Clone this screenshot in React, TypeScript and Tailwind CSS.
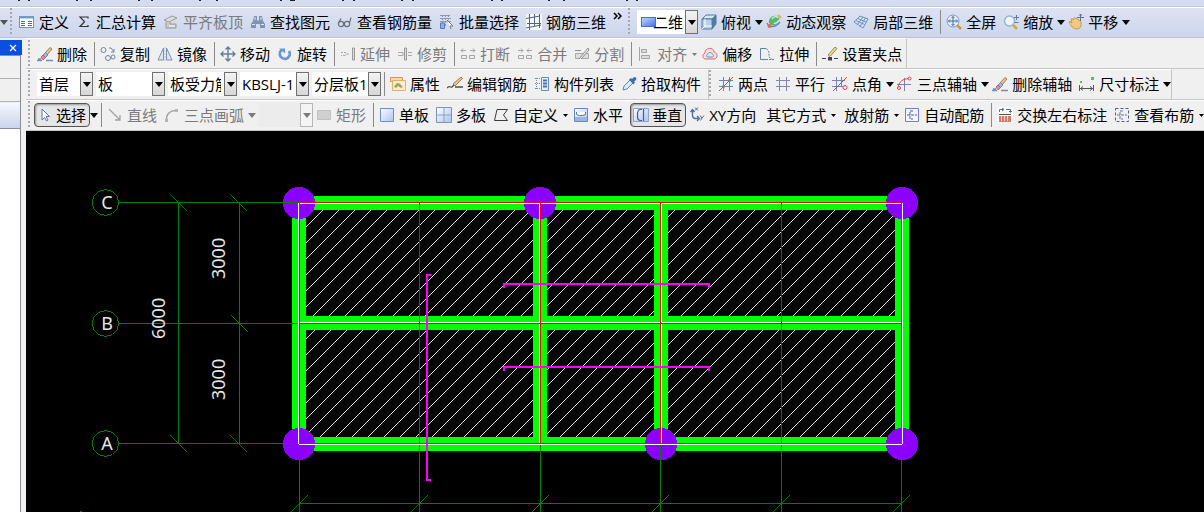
import { useState } from "react";
import type { ReactNode } from "react";
import clsx from "clsx";

/* 16x16 toolbar icons */
const icons: Record<string, ReactNode> = {
  define: (
    <>
      <rect x="0.5" y="2.5" width="14" height="11" fill="#fff" stroke="#7c93ad" />
      <path d="M1 3.5h13" stroke="#6f9fd8" strokeWidth="2" />
      <path d="M2 7.5h4M2 9.5h4M2 11.5h4M9 7.5h4M9 9.5h4M9 11.5h4" stroke="#56677a" />
    </>
  ),
  sum: <path d="M12 4.5V3H4l4.5 4.7L4 12.5h8V11" fill="none" stroke="#333" strokeWidth="1.2" />,
  slabTop: (
    <>
      <path d="M1 6 9 2l5 2-8 4z" fill="#ddd" stroke="#9a9a9a" />
      <path d="M3 8v6h10v-4H7V8" fill="#c9c9c9" stroke="#9a9a9a" />
      <path d="M6 12h6" stroke="#fff" />
    </>
  ),
  find: (
    <>
      <path d="M4 2h3v4l1 1 1-1V2h3l1 5 2 3v4h-5v-4H6v4H1v-4l2-3z" fill="#7f92b0" />
      <path d="M2 10.5h3M11 10.5h3M5 3v3M11 3v3" stroke="#dfe7f5" />
    </>
  ),
  glasses: (
    <g fill="none" stroke="#6d7075" strokeWidth="1.2">
      <circle cx="4" cy="10" r="2.6" />
      <circle cx="10" cy="10" r="2.6" />
      <path d="M1.500 9 4 4.500M12.500 9 14 3.500M6.500 9.500h1" />
    </g>
  ),
  batch: (
    <>
      <path d="M1 1.500h10M1 4.500h12M1 7.500h12M3.500 1v12M6.500 1v12M9.500 1v6" stroke="#8d99ad" strokeDasharray="2 1" />
      <path d="M1.500 9v5.500h4V9z" fill="#8eaeee" stroke="#5a78b8" />
      <path d="m8 6 6 6h-3l1 3" fill="#fff" stroke="#777" />
    </>
  ),
  rebar3d: (
    <>
      <rect width="16" height="16" fill="#f5f7fb" />
      <path d="M3.500 0v16M8.500 0v12M13.500 0v14M0 4.500 14 2M1 9.500h14M0 14l15-3" stroke="#53647e" fill="none" />
    </>
  ),
  cube: (
    <>
      <path d="M1 5 5 1h10l-4 4z" fill="#d7e6f5" stroke="#55799c" />
      <path d="M11 5 15 1v9l-4 5z" fill="#4f7ca8" stroke="#55799c" />
      <path d="M1 5h10v10H1z" fill="#b7d1ea" stroke="#55799c" />
      <path d="M4 5v7h7M1 15l3-3" stroke="#fff" fill="none" />
    </>
  ),
  orbit: (
    <>
      <path d="M3 9c-1-4 3-8 8-7 3 1 3 6 0 8-3 2-6 2-8-1z" fill="#58b873" />
      <path d="M6 5c2-3 5-3 6-1M8 9c2 1 4-1 5-3" stroke="#c8efcf" fill="none" strokeWidth="1.500" />
      <path d="M1 9c2 5 8 5 13-1" stroke="#5e86c4" fill="none" strokeWidth="1.300" />
      <circle cx="3.500" cy="12" r="2" fill="#e2694f" />
      <path d="m12 1 3 3" stroke="#d9b35c" strokeWidth="2" />
    </>
  ),
  local3d: (
    <>
      <path d="m1 8 6-6 8 3-5 9z" fill="#d3e2f2" stroke="#6f92b8" />
      <path d="m3 6.500 8.500 4M5 4.500l8 3.500M4 11 10 3M7 12.500 12.500 4" stroke="#6f92b8" />
    </>
  ),
  fullscreen: (
    <>
      <path d="m11 11 4 4" stroke="#d19a3f" strokeWidth="2.500" />
      <circle cx="7" cy="7" r="6" fill="#e3effb" stroke="#7d9cc2" />
      <path d="M7 2.500v9M2.500 7h9M5.500 4 7 2.500 8.500 4M5.500 10 7 11.500 8.500 10M4 5.500 2.500 7 4 8.500M10 5.500 11.500 7 10 8.500" stroke="#4c6a95" fill="none" />
    </>
  ),
  zoom: (
    <>
      <path d="m10 11 4 4" stroke="#d9a441" strokeWidth="2.500" />
      <circle cx="6.500" cy="7" r="5" fill="#eef5fc" stroke="#9fb4cc" strokeWidth="1.500" />
      <path d="M13.500 1v5M11 3.500h5M11.500 8.500h4" stroke="#5b7ba6" />
    </>
  ),
  pan: (
    <>
      <path d="M1 8c1-1 2 0 3 1L3 5c1-1 2 0 2 1l1-2c1-1 2 0 2 1 1-1 2 0 2 1 2 0 2 1 3 2 1 4-1 7-4 7-4 0-6-3-8-7z" fill="#f0cb7c" stroke="#b98b3c" strokeWidth=".8" />
      <path d="M12.500 0v7M9 3.500h7M11 1.500 12.500 0 14 1.500" stroke="#5f6f88" fill="none" />
    </>
  ),
  brush: (
    <>
      <path d="M8 7 13 1.500l2 1.500-5 6z" fill="#e5c48a" stroke="#8a6b44" strokeWidth=".8" />
      <path d="m6 9 2.500-2.500L11 9l-3 3z" fill="#9db8e6" stroke="#5d79b5" strokeWidth=".8" />
      <path d="m4 11 2-2 2.500 2.500L6 14z" fill="#e8898f" stroke="#a85561" strokeWidth=".8" />
      <path d="M0 14.500h5M9 14.500h7M1 13h3" stroke="#7092b8" strokeWidth="1.500" />
    </>
  ),
  copy: (
    <g fill="none" stroke="#6d87a5">
      <circle cx="3.500" cy="4" r="2.500" />
      <circle cx="8" cy="12" r="2.500" />
      <circle cx="13" cy="11" r="2" />
      <path d="M9 2h2l3 4M14 3v3h-3" />
    </g>
  ),
  mirror: (
    <>
      <path d="M6.500 2v12H1zM9.500 2v12H15z" fill="#dbe6f3" stroke="#7893b3" />
      <path d="M8 1v15" stroke="#b5c4d6" strokeDasharray="2 1" />
    </>
  ),
  move: (
    <path d="M8 1v14M1 8h14M5.500 3.500 8 1l2.500 2.500M5.500 12.500 8 15l2.500-2.500M3.500 5.500 1 8l2.500 2.500M12.500 5.500 15 8l-2.500 2.500" fill="none" stroke="#647f9e" strokeWidth="1.400" />
  ),
  rotate: (
    <>
      <path d="M4.500 4A5 5 0 1 0 12 5" fill="none" stroke="#6d95d2" strokeWidth="2.800" />
      <path d="M2 2.500h6v5z" fill="#6d95d2" />
    </>
  ),
  extend: (
    <>
      <path d="M1 6.500h5v3H1M7 8h3" fill="none" stroke="#aaa" strokeDasharray="2 1" />
      <path d="M12.500 2h2v12h-2z" fill="#ddd" stroke="#999" />
    </>
  ),
  trim: (
    <>
      <path d="M1 6.500h5v3H1M11 6.500h4M11 9.500h4" fill="none" stroke="#aaa" />
      <path d="M7.500 2h2v12h-2z" fill="#ddd" stroke="#999" />
    </>
  ),
  breakUp: (
    <path d="M1 4.500h5M10 4.500h5M3 2.500 1 4.500l2 2M13 2.500l2 2-2 2M1.500 9.500h5v3h-5zM9.500 9.500h5v3h-5z" fill="none" stroke="#a5a5a5" />
  ),
  merge: (
    <path d="M1 4.500h5M10 4.500h5M4 2.500l2 2-2 2M12 2.500l-2 2 2 2M1.500 9.500h5v3h-5zM9.500 9.500h5v3h-5z" fill="none" stroke="#a5a5a5" />
  ),
  split: (
    <>
      <path d="M1.500 7.500h13v5h-13z" fill="#ddd" stroke="#aaa" />
      <path d="M5 13 14 2l1 2-8 9M1 4.500h6" fill="#eee" stroke="#8e8e8e" />
    </>
  ),
  align: (
    <path d="M2.500 1v14M4.500 3.500h5v3h-5zM4.500 9.500h8v3h-8z" fill="#ddd" stroke="#a5a5a5" />
  ),
  offset: (
    <>
      <path d="M4 13c-4 0-4-5-1-6 0-6 9-6 9-1 4 1 4 7 0 7z" fill="#f7dcdc" stroke="#cf6d70" />
      <path d="M6 11c-2 0-2-2 0-3 0-2 4-2 4 0 2 1 2 3 0 3z" fill="#dbe8f8" stroke="#6d8fbd" />
    </>
  ),
  stretch: (
    <>
      <path d="M7 2.500H1.500v11H7" fill="none" stroke="#5f83ae" />
      <path d="M7.500 2.500 10 6v5l4 3M7 13.500h8" fill="none" stroke="#5f83ae" strokeDasharray="2 1" />
    </>
  ),
  grip: (
    <>
      <path d="m6 9 7-8 2 1.500-7 8z" fill="#f0d493" stroke="#8a7343" strokeWidth=".8" />
      <path d="M0 12.500h4M12 12.500h4" stroke="#444" />
      <path d="M6 11h4v3.500H6z" fill="#444" />
    </>
  ),
  props: (
    <>
      <path d="M.5 1.500h12v4H.5z" fill="#f6d9a8" stroke="#d39a4e" />
      <path d="M2.500 4.500h13v10h-13z" fill="#fdeecb" stroke="#e0b068" />
      <path d="M4 11c2-4 4-5 6-3l3 3-2 1-3-2-2 2z" fill="#a3a366" />
    </>
  ),
  editRebar: (
    <>
      <path d="m6 8 8-7 1.500 1.500L8 10z" fill="#e6c58b" stroke="#8c6a3c" strokeWidth=".8" />
      <path d="M0 12c3-3 4 0 5-1l2-2M8 11h8" stroke="#46563f" fill="none" strokeWidth="1.300" />
    </>
  ),
  list: (
    <>
      <path d="M1 2.500h5M1 7.500h5M1 12.500h5M2.500 2v12" stroke="#7d8aa0" strokeDasharray="1 1" />
      <path d="M7.500 1.500h7v13h-7z" fill="#e5eefb" stroke="#6a89b8" />
      <path d="M9 4.500h4M9 7.500h4M9 10.500h4" stroke="#4a73b5" strokeWidth="2" />
    </>
  ),
  picker: (
    <>
      <path d="m2 14 1-4 6-6 3 3-6 6z" fill="#d5e9f8" stroke="#5e88b5" />
      <path d="M8 3.500 10 2l1 1 2-2c2 0 3 1 2 3l-2 1.500 1 1-1.500 2z" fill="#3f6fa8" />
    </>
  ),
  twoPoints: (
    <>
      <path d="M5.500 1v14M11.500 1v14M1 4.500h14M1 10.500h14" stroke="#7d7fae" />
      <path d="M1 15 15 1" stroke="#cc4848" />
      <path d="M4 9.500h3v2H4zM10 3.500h3v2h-3z" fill="#5f9c50" />
    </>
  ),
  parallel: <path d="M4.500 1v14M11.500 1v14M1 4.500h14M1 10.500h14" stroke="#8385b3" />,
  pointAngle: (
    <>
      <path d="M4.500 1v14M9.500 1v10M0 4.500h13M0 10.500h11" stroke="#7d7fae" />
      <path d="M1 15 15 1" stroke="#d04444" />
      <circle cx="13" cy="11.500" r="2" fill="none" stroke="#d04444" />
    </>
  ),
  arcAxis: (
    <>
      <path d="M7.500 2v13M0 8.500h14" stroke="#7d7fae" />
      <path d="M1 12C2 5 6 3 12 2.500" fill="none" stroke="#d04444" />
      <circle cx="12.500" cy="2.500" r="1.500" fill="#f0f0f0" stroke="#d04444" />
      <circle cx="2" cy="12" r="1.500" fill="#f0f0f0" stroke="#d04444" />
    </>
  ),
  dimension: (
    <>
      <path d="M1 5h2v2H1zM12 1h3v3h-3z" fill="#64b56d" />
      <path d="M.5 9v6M14.500 9v6M1 12.500h13M4 10.500l-2.500 2 2.500 2M11 10.500l2.500 2-2.500 2" stroke="#555" fill="none" />
    </>
  ),
  cursor: <path d="M5 2v11l2.500-2.500L9.500 14l1.500-1-2-3.500h3.500z" fill="#fff" stroke="#5d76a5" />,
  line: <path d="m2 2 11 11M13 8v5H8" fill="none" stroke="#a3a3a3" strokeWidth="1.300" />,
  arc: (
    <>
      <path d="M2.500 13C2 7 6 3.500 12 3.500" fill="none" stroke="#a3a3a3" strokeWidth="1.300" />
      <path d="M1 12h3v3H1zM11 2h3v3h-3zM4 5h2v2H4z" fill="#b5b5b5" />
    </>
  ),
  rect: <path d="M1.500 3.500h13v9h-13z" fill="#d0d0d0" stroke="#c0c0c0" />,
  singleSlab: <path d="M1.500 1.500h13v13h-13z" fill="url(#slabFill)" stroke="#6d8fd0" />,
  multiSlab: (
    <>
      <path d="M.5.5h15v15H.5z" fill="url(#slabFill)" stroke="#7d94b5" />
      <path d="M8 1v14M1 8h14" stroke="#8aa3c6" />
    </>
  ),
  polygon: <path d="M4 2.500h10.500L10.500 8l4 5.500H1.500z" fill="none" stroke="#3c3c3c" />,
  horizontal: (
    <>
      <path d="M1.500 1.500h13v13h-13z" fill="url(#slabFill)" stroke="#6a87b5" />
      <path d="M2 10h12v4H2z" fill="#9ab6e0" />
      <path d="M3.500 5v2c0 2 9 2 9 0V5" fill="#fff" stroke="#4f6f9f" />
    </>
  ),
  vertical: (
    <>
      <path d="M.5 1.500h15v13H.5z" fill="url(#slabFill)" stroke="#88a5d0" />
      <path d="M9 2.500H7C5 3 4.500 5 4.500 7v3c0 2 .5 3 2.500 3.500h2M10.500 2v12" fill="none" stroke="#44618f" strokeWidth="1.200" />
    </>
  ),
  xy: (
    <>
      <path d="M3.500 3v5c0 2 1 3.500 3 3.500h3M1.500 5l2-2.500 2 2.500M8 9l2.500 2.500L8 14" fill="none" stroke="#4a70ae" strokeWidth="1.400" />
      <path d="m6 .5 3 3M9 .5l-3 3M11 8.500l2 2.500 2-2.500M13 11l-1.500 2.500" fill="none" stroke="#666" />
    </>
  ),
  autoRebar: (
    <>
      <path d="M1.500 1.500h13v13h-13z" fill="#f4f4fd" stroke="#7b7bc6" />
      <path d="M9 4H6v8h3M3 8h10" fill="none" stroke="#44608c" strokeDasharray="3 1" />
    </>
  ),
  swap: (
    <>
      <path d="M0 0h16v16H0z" fill="#fafafa" />
      <path d="M2.500 5V2.500H7M9 2.500h4.500V5M5 1l2 1.500L5 4M12 4l1.500 1.500L15 4" fill="none" stroke="#55708f" />
      <path d="M2 7.500h12" stroke="#555" />
      <path d="M2 9h12v6H2z" fill="#d87a66" />
      <path d="M4.500 9v5M7.500 9v5M10.500 9v5" stroke="#f2d5cf" />
    </>
  ),
  viewRebar: (
    <>
      <path d="M1.500 1.500h13v13h-13z" fill="none" stroke="#55607c" strokeDasharray="3 2" />
      <path d="M9 4H6v8h3M3 8h10" fill="none" stroke="#6477a0" strokeDasharray="3 1" />
    </>
  ),
};

function Icon({ name }: { name: string }) {
  return (
    <svg className="size-4 shrink-0" viewBox="0 0 16 16" fill="none" aria-hidden="true">
      {icons[name]}
    </svg>
  );
}

function Caret({ small = false }: { small?: boolean }) {
  return (
    <svg className="w-2 h-2 shrink-0" viewBox="0 0 8 8" fill="currentColor" aria-hidden="true">
      <path d={small ? "M1 3h5L3.500 6z" : "M0 2h8L4 7z"} />
    </svg>
  );
}

type ToolProps = {
  icon?: string;
  label: string;
  menu?: boolean | "small";
  disabled?: boolean;
};

function Tool({ icon, label, menu, disabled }: ToolProps) {
  return (
    <button
      type="button"
      disabled={disabled}
      className={clsx(
        "flex h-6 shrink-0 items-center gap-1",
        !menu && "pr-1",
        !icon && "pl-[3px]",
        disabled ? "text-[#7b7b7b]" : "text-black"
      )}
    >
      {icon && <Icon name={icon} />}
      <span>{label}</span>
      {menu && <Caret small={menu === "small"} />}
    </button>
  );
}

function ToggleTool({ icon, label }: { icon: string; label: string }) {
  const [pressed, setPressed] = useState(true);
  return (
    <button
      type="button"
      aria-pressed={pressed}
      onClick={() => setPressed(!pressed)}
      className={clsx(
        "flex h-6 shrink-0 items-center gap-[3px] rounded-sm border px-[2px]",
        pressed ? "border-[#555] bg-[#e6e6e6] shadow-[inset_1px_1px_2px_#999]" : "border-transparent"
      )}
    >
      <Icon name={icon} />
      <span className="pr-px">{label}</span>
    </button>
  );
}

function Grip({ narrow = false }: { narrow?: boolean }) {
  return (
    <div className={clsx("h-7 shrink-0", narrow ? "w-[3px]" : "w-[6px]")}>
      <div className="h-full w-[2px] bg-[repeating-linear-gradient(to_bottom,#a8a8ac_0_2px,transparent_2px_4px)]" />
    </div>
  );
}

function Separator() {
  return <div className="h-6 w-[3px] shrink-0 border-l border-[#8a8a8a]" />;
}

type ComboProps = {
  label: string;
  value: string;
  className: string;
  icon?: ReactNode;
  disabled?: boolean;
};

function Combo({ label, value, className, icon, disabled }: ComboProps) {
  return (
    <div className={clsx("relative h-6 shrink-0", disabled ? "bg-[#ececec] text-[#7b7b7b]" : "bg-white", className)}>
      <select
        aria-label={label}
        disabled={disabled}
        className={clsx("h-full w-full appearance-none outline-none", icon ? "pl-4 pr-[14px]" : "pl-[2px] pr-4")}
      >
        <option>{value}</option>
      </select>
      {icon}
      <span
        className={clsx(
          "pointer-events-none absolute inset-y-0 right-0 flex w-[13px] items-center justify-center border",
          disabled ? "border-[#b5b5b5] bg-[#f4f4f4]" : "border-[#707070] bg-linear-to-b from-[#f4f4f4] to-[#d6d6d6]"
        )}
      >
        <Caret />
      </span>
    </div>
  );
}

const rowClass = "flex h-[31px] items-center border-b border-[#c6c6c6]";
const barClass = "flex h-[30px] shrink-0 items-center gap-[3px] border-t border-white";

const wallFills = [
  [292, 196, 617, 14],
  [292, 316, 617, 14],
  [292, 437, 617, 14],
  [292, 203, 14, 241],
  [533, 203, 14, 241],
  [654, 203, 14, 241],
  [895, 203, 14, 241],
];
const columns = [
  [299, 203],
  [540, 203],
  [902, 203],
  [299, 444],
  [661, 444],
  [902, 444],
];
const axes = [
  { name: "C", y: 202 },
  { name: "B", y: 323 },
  { name: "A", y: 443 },
];
const gridX = [299, 419, 540, 660, 781, 901];

function Drawing() {
  return (
    <svg
      className="block h-[381px] w-[1178px] max-w-none"
      viewBox="26 131 1178 381"
      role="img"
      aria-label="楼板平面图"
      shapeRendering="crispEdges"
    >
      <defs>
        <pattern id="hatch" width="16" height="16" patternUnits="userSpaceOnUse">
          <path d="M-1 6 6-1M3 18 18 3" stroke="#e0e0e0" />
        </pattern>
      </defs>

      <rect x="299" y="203" width="603" height="241" fill="#050505" />
      <rect x="299" y="203" width="603" height="241" fill="url(#hatch)" />
      {wallFills.map(([x, y, w, h]) => (
        <rect key={`${x}-${y}-${w}`} x={x} y={y} width={w} height={h} fill="#00ff00" />
      ))}
      {/* round off the outer corners under the columns */}
      <path d="M292 196h7v7h-7zM902 196h7v7h-7zM292 444h7v7h-7zM902 444h7v7h-7z" fill="#000" />
      {columns.map(([x, y]) => (
        <circle key={`${x}-${y}`} cx={x} cy={y} r="16" fill="#8b00ff" />
      ))}

      {/* dimension lines */}
      <g fill="none" stroke="#008000">
        {axes.map((a) => (
          <path key={a.name} d={`M119 ${a.y + 0.5}H299`} />
        ))}
        {axes.map((a) => (
          <path
            key={a.name}
            d={`M105.500 ${a.y - 12.5}l7 2 5 5 1 6-1 6-5 5-7 2-7-2-5-5-1-6 1-6 5-5z`}
          />
        ))}
        <path d="M178.500 202V444M239.500 202V444M170 194l17 17M230 194l17 17M231 315l17 17M170 435l17 17M230 435l17 17" />
        {gridX.map((x) => (
          <path key={x} d={`M${x + 0.5} 443V512M${x - 8} 512l17-17`} />
        ))}
        <path d="M299 503.500H902M80 511.500h2" />
      </g>

      {/* wall centre lines */}
      <path
        d="M298.500 203V444M539.500 203V444M661.500 203V444M902.500 203V444M299 203.500H902M299 322.500H902M299 444.500H902"
        stroke="#fff"
      />
      <path
        d="M299.500 202V443M540.500 202V443M660.500 202V443M901.500 202V443M299 202.500H902M299 443.500H902M299 323.500H902"
        stroke="#ff0000"
      />
      <path d="M419.500 203V443M781.500 203V443" stroke="#e00000" />

      {/* rebar */}
      <path
        d="M431 275H427V480H431M504 288V284H709V288M504 371V367H709V371"
        fill="none"
        stroke="#ff00ff"
        strokeWidth="2"
      />

      <g fill="#e6e6e6" className="font-['Noto_Sans','Noto_Sans_CJK_SC',sans-serif] text-[18px]">
        {axes.map((a) => (
          <text key={a.name} x="107" y={a.y + 7} textAnchor="middle">
            {a.name}
          </text>
        ))}
        <text transform="translate(225 279) rotate(-90)">3000</text>
        <text transform="translate(225 400) rotate(-90)">3000</text>
        <text transform="translate(165 339) rotate(-90)">6000</text>
      </g>
    </svg>
  );
}

function DockPanel() {
  return (
    <aside className="flex w-[26px] shrink-0 flex-col bg-[#f0f0f0] pt-[2px] pr-[4px]">
      <div className="flex h-[15px] items-center justify-end bg-[#0a4fe0] pr-[5px]">
        <button type="button" aria-label="关闭" className="text-white">
          <svg className="size-2" viewBox="0 0 8 8" stroke="currentColor" strokeWidth="1.200">
            <path d="m1 1 6 6M7 1 1 7" />
          </svg>
        </button>
      </div>
      <div className="mr-px flex flex-1 flex-col border-t border-r border-[#8a8d96]">
        <div className="h-[23px] border-b border-[#b0b0b0]" />
        <div className="h-[23px] border-b border-[#b0b0b0]" />
        <div className="mt-px h-[26px] border-b border-[#8a8d96] bg-linear-to-b from-[#f5f8ff] to-[#c9d3ec]" />
        <div className="flex-1 bg-white" />
      </div>
    </aside>
  );
}

export default function App() {
  return (
    <div className="flex min-h-screen flex-col overflow-hidden bg-[#f0f0f0] font-['Open_Sans','Noto_Sans_CJK_SC',sans-serif] text-[15px] leading-5 whitespace-nowrap text-black">
      <svg width="0" height="0" className="absolute" aria-hidden="true">
        <linearGradient id="slabFill" x1="0" y1="0" x2="1" y2="1">
          <stop offset="0" stopColor="#fff" />
          <stop offset="1" stopColor="#a9c3f0" />
        </linearGradient>
        <linearGradient id="viewFill" x1="0" y1="0" x2="1" y2="1">
          <stop offset="0" stopColor="#c5dbff" />
          <stop offset="1" stopColor="#3f74e0" />
        </linearGradient>
      </svg>

      {/* lower edge of the menu bar */}
      <div className="h-[7px] border-b border-[#c5c8cf] bg-[#d5dcef]">
        <svg className="block h-px w-[660px]" viewBox="0 0 660 1" stroke="#222" aria-hidden="true">
          <path d="M18 .5h2M28 .5h2M76 .5h2M90 .5h2M138 .5h2M151 .5h2M199 .5h2M216 .5h2M280 .5h2M290 .5h5M342 .5h2M353 .5h2M401 .5h2M412 .5h2M491 .5h2M501 .5h2M548 .5h2M563 .5h2M626 .5h2M636 .5h2" />
        </svg>
      </div>

      <div className="flex h-[31px] items-center gap-[3px] border-t border-b border-t-white border-b-[#bfc3cd] bg-linear-to-b from-[#dde3f3] to-[#ccd5ec] pb-[2px]">
        <div className="w-[7px] shrink-0 text-[#555]">
          <Caret />
        </div>
        <Grip />
        <Tool icon="define" label="定义" />
        <Tool icon="sum" label="汇总计算" />
        <Tool icon="slabTop" label="平齐板顶" disabled />
        <Tool icon="find" label="查找图元" />
        <Tool icon="glasses" label="查看钢筋量" />
        <Tool icon="batch" label="批量选择" />
        <Tool icon="rebar3d" label="钢筋三维" />
        <button type="button" aria-label="更多" className="flex h-6 w-3 shrink-0 items-start pt-[2px]">
          <svg className="h-2 w-[9px]" viewBox="0 0 9 8" fill="none" stroke="#000" strokeWidth="1.500">
            <path d="m1 1 3 3-3 3M5 1l3 3-3 3" />
          </svg>
        </button>
        <Grip />
        <Combo
          label="视图"
          value="二维"
          className="w-[61px]"
          icon={
            <svg className="pointer-events-none absolute top-[7px] left-1 h-[10px] w-4" viewBox="0 0 16 10" aria-hidden="true">
              <rect width="16" height="10" fill="#fff" />
              <rect x=".5" y=".5" width="14" height="9" fill="url(#viewFill)" stroke="#4a6fc0" />
            </svg>
          }
        />
        <Tool icon="cube" label="俯视" menu />
        <Tool icon="orbit" label="动态观察" />
        <Tool icon="local3d" label="局部三维" />
        <Separator />
        <Tool icon="fullscreen" label="全屏" />
        <Tool icon="zoom" label="缩放" menu />
        <Tool icon="pan" label="平移" menu />
      </div>

      <div className="flex flex-1">
        <DockPanel />
        <main className="flex min-w-0 flex-1 flex-col">
          <div className={rowClass}>
            <div className={clsx(barClass, "border-r border-r-[#c6c6c6] pl-[2px]")}>
              <Grip />
              <Tool icon="brush" label="删除" />
              <Separator />
              <Tool icon="copy" label="复制" />
              <Tool icon="mirror" label="镜像" />
              <Separator />
              <Tool icon="move" label="移动" />
              <Tool icon="rotate" label="旋转" />
              <Separator />
              <Tool icon="extend" label="延伸" disabled />
              <Tool icon="trim" label="修剪" disabled />
              <Separator />
              <Tool icon="breakUp" label="打断" disabled />
              <Tool icon="merge" label="合并" disabled />
              <Tool icon="split" label="分割" disabled />
              <Separator />
              <Tool icon="align" label="对齐" menu="small" disabled />
              <Tool icon="offset" label="偏移" />
              <Tool icon="stretch" label="拉伸" />
              <Separator />
              <Tool icon="grip" label="设置夹点" />
            </div>
          </div>

          <div className={rowClass}>
            <div className={clsx(barClass, "border-r border-r-[#c6c6c6] pl-[2px] pr-[3px] pb-[2px]")}>
              <Grip />
              <Combo label="楼层" value="首层" className="w-14" />
              <Combo label="构件类型" value="板" className="w-[69px]" />
              <Combo label="构件" value="板受力筋" className="w-[69px]" />
              <Combo label="构件名称" value="KBSLJ-1" className="w-[69px]" />
              <Combo label="分层" value="分层板1" className="w-[69px]" />
              <Separator />
              <Tool icon="props" label="属性" />
              <Tool icon="editRebar" label="编辑钢筋" />
              <Tool icon="list" label="构件列表" />
              <Tool icon="picker" label="拾取构件" />
            </div>
            <div className={clsx(barClass, "border-r border-r-[#c6c6c6] pb-[2px]")}>
              <Grip />
              <Tool icon="twoPoints" label="两点" />
              <Tool icon="parallel" label="平行" />
              <Tool icon="pointAngle" label="点角" menu />
              <Tool icon="arcAxis" label="三点辅轴" menu />
              <Tool icon="brush" label="删除辅轴" />
              <Tool icon="dimension" label="尺寸标注" menu />
            </div>
          </div>

          <div className={rowClass}>
            <div className={clsx(barClass, "pl-[2px] pb-[2px]")}>
              <Grip narrow />
              <div className="flex shrink-0 items-center">
                <ToggleTool icon="cursor" label="选择" />
                <button type="button" aria-label="选择方式">
                  <Caret />
                </button>
              </div>
              <Separator />
              <Tool icon="line" label="直线" disabled />
              <Tool icon="arc" label="三点画弧" menu disabled />
              <Combo label="画弧参数" value="" className="w-[54px]" disabled />
              <Tool icon="rect" label="矩形" disabled />
              <Separator />
              <Tool icon="singleSlab" label="单板" />
              <Tool icon="multiSlab" label="多板" />
              <Tool icon="polygon" label="自定义" menu="small" />
              <Tool icon="horizontal" label="水平" />
              <ToggleTool icon="vertical" label="垂直" />
              <Tool icon="xy" label="XY方向" />
              <Tool label="其它方式" menu="small" />
              <Tool label="放射筋" menu="small" />
              <Tool icon="autoRebar" label="自动配筋" />
              <Separator />
              <Tool icon="swap" label="交换左右标注" />
              <Tool icon="viewRebar" label="查看布筋" menu="small" />
            </div>
          </div>

          <div className="flex-1 overflow-hidden bg-black">
            <Drawing />
          </div>
        </main>
      </div>
    </div>
  );
}
